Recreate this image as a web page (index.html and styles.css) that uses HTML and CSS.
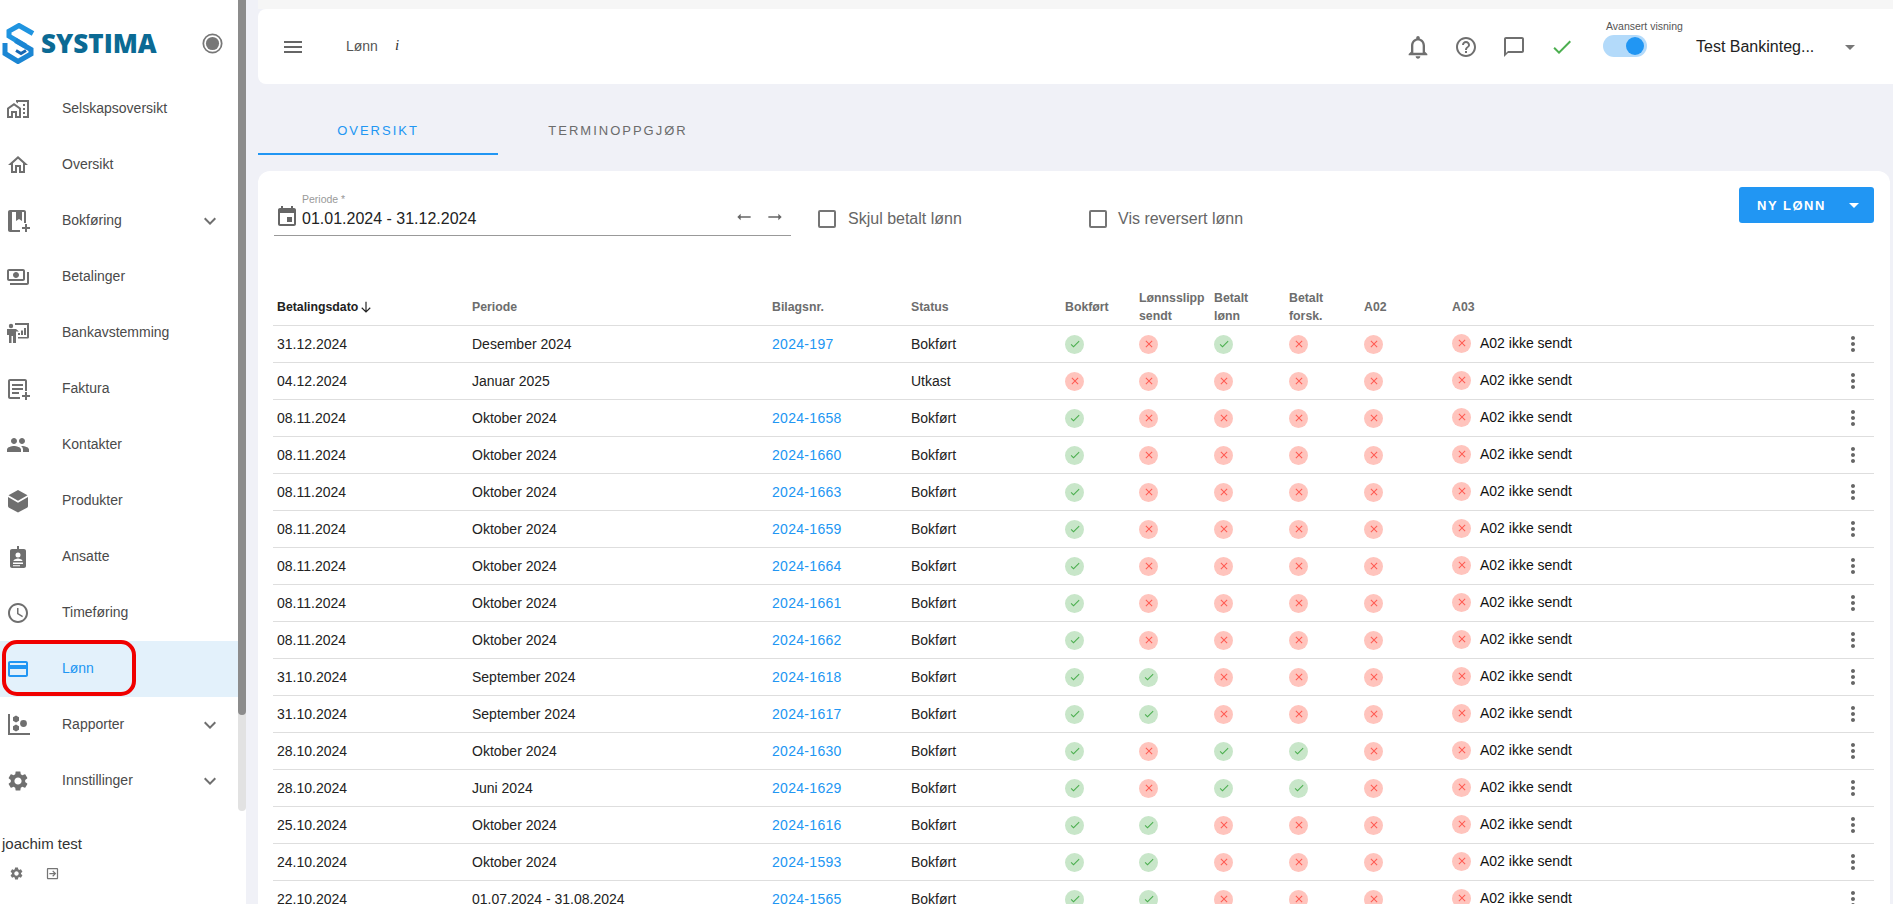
FILE: index.html
```html
<!DOCTYPE html>
<html lang="no">
<head>
<meta charset="utf-8">
<title>Lønn</title>
<link rel="stylesheet" href="styles.css">
</head>
<body>
<svg class="defs" width="0" height="0" aria-hidden="true">
  <symbol id="i-homework" viewBox="0 0 24 24"><path d="M1 11v10h6v-5h2v5h6V11L8 6l-7 5zm12 8h-2v-5H5v5H3v-7l5-3.5 5 3.5v7zM17 7h2v2h-2zM17 11h2v2h-2zM17 15h2v2h-2zM10 3v1.97l2 1.43V5h9v14h-4v2h6V3z"/></symbol>
  <symbol id="i-home" viewBox="0 0 24 24"><path d="M12 5.69l5 4.5V18h-2v-6H9v6H7v-7.81l5-4.5M12 3L2 12h3v8h6v-6h2v6h6v-8h3L12 3z"/></symbol>
  <symbol id="i-book" viewBox="0 0 24 24"><path fill-rule="evenodd" d="M4 1h14c1.100 0 2 .9 2 2v11h-2V3h-2v9l-3-2-3 2V3H6v18h8v2H4c-1.100 0-2-.9-2-2V3c0-1.100.9-2 2-2zm15 14h2v3h3v2h-3v3h-2v-3h-3v-2h3z"/></symbol>
  <symbol id="i-pay" viewBox="0 0 24 24"><path d="M19 14V6c0-1.1-.9-2-2-2H3c-1.1 0-2 .9-2 2v8c0 1.1.9 2 2 2h14c1.1 0 2-.9 2-2zm-2 0H3V6h14v8zm-7-7c-1.66 0-3 1.34-3 3s1.34 3 3 3 3-1.34 3-3-1.34-3-3-3zm13 0v11c0 1.1-.9 2-2 2H4v-2h17V7h2z"/></symbol>
  <symbol id="i-bank" viewBox="0 0 24 24"><circle cx="5" cy="5" r="2.200"/><path d="M1 8h9l3 2.500h-3V22H7v-7H5.500v7H3v-8H1z"/><path d="M9 2h14v14c0 1-.8 1.500-1.500 1.500H12V16h9V4H9z"/><path d="M12 12h2v2h-2zM15 9.500h2V14h-2zM18 7h2v7h-2z"/></symbol>
  <symbol id="i-invoice" viewBox="0 0 24 24"><path d="M4 2h15c1.100 0 2 .9 2 2v10h-2V4H4v16h10v2H4c-1.100 0-2-.9-2-2V4c0-1.100.9-2 2-2zm2 5h11v2H6zm0 4h11v2H6zm0 4h7v2H6zm13 0h2v3h3v2h-3v3h-2v-3h-3v-2h3z"/></symbol>
  <symbol id="i-people" viewBox="0 0 24 24"><path d="M16 11c1.660 0 2.990-1.340 2.990-3S17.660 5 16 5c-1.660 0-3 1.340-3 3s1.340 3 3 3zm-8 0c1.660 0 2.990-1.340 2.990-3S9.660 5 8 5C6.340 5 5 6.340 5 8s1.340 3 3 3zm0 2c-2.330 0-7 1.170-7 3.500V19h14v-2.500c0-2.330-4.670-3.500-7-3.500zm8 0c-.29 0-.62.02-.97.05 1.160.84 1.970 1.970 1.970 3.450V19h6v-2.500c0-2.330-4.670-3.500-7-3.500z"/></symbol>
  <symbol id="i-box" viewBox="0 0 24 24"><path d="M12 1l9.500 5.300-9.500 5.400-9.500-5.400z"/><path d="M2 8l10 5.700L22 8v9c0 .7-.4 1.400-1 1.700L12 23.500l-9-4.800c-.6-.3-1-1-1-1.700z"/></symbol>
  <symbol id="i-badge" viewBox="0 0 24 24"><path fill-rule="evenodd" d="M11 1h2v3h5c1.100 0 2 .9 2 2v15c0 1.100-.9 2-2 2H6c-1.100 0-2-.9-2-2V6c0-1.100.9-2 2-2h5zM12 7.500a2.500 2.500 0 100 5 2.500 2.500 0 000-5zM7.500 16c0-1.500 3-2.500 4.500-2.500s4.500 1 4.500 2.500H7.500zM7 17.500v1.500h10v-1.500zM7 20.200v1h7v-1z"/></symbol>
  <symbol id="i-clock" viewBox="0 0 24 24"><path d="M11.990 2C6.470 2 2 6.480 2 12s4.470 10 9.990 10C17.520 22 22 17.520 22 12S17.520 2 11.990 2zM12 20c-4.420 0-8-3.580-8-8s3.580-8 8-8 8 3.580 8 8-3.580 8-8 8zm.5-13H11v6l5.250 3.150.75-1.230-4.500-2.670z"/></symbol>
  <symbol id="i-card" viewBox="0 0 24 24"><path d="M20 4H4c-1.110 0-1.990.89-1.990 2L2 18c0 1.110.89 2 2 2h16c1.110 0 2-.89 2-2V6c0-1.110-.89-2-2-2zm0 14H4v-6h16v6zm0-10H4V6h16v2z"/></symbol>
  <symbol id="i-report" viewBox="0 0 24 24"><path d="M2 1h2v19h20v2H2z"/><path d="M10 2.500l3 1.700v3.500l-3 1.700-3-1.700V4.200zM10 11.500l3 1.700v3.500l-3 1.700-3-1.700v-3.500z"/><circle cx="17.500" cy="10.500" r="3.400"/></symbol>
  <symbol id="i-gear" viewBox="0 0 24 24"><path d="M19.140 12.940c.04-.3.06-.61.06-.94 0-.32-.02-.64-.07-.94l2.030-1.580c.18-.14.23-.41.12-.61l-1.920-3.320c-.12-.22-.37-.29-.59-.22l-2.390.96c-.5-.38-1.030-.7-1.620-.94l-.36-2.540c-.04-.24-.24-.41-.48-.41h-3.840c-.24 0-.43.17-.47.41l-.36 2.540c-.59.24-1.130.57-1.620.94l-2.390-.96c-.22-.08-.47 0-.59.22L2.740 8.870c-.12.21-.08.47.12.61l2.030 1.580c-.05.3-.09.63-.09.94s.02.64.07.94l-2.030 1.580c-.18.14-.23.41-.12.61l1.920 3.320c.12.22.37.29.59.22l2.390-.96c.5.38 1.030.7 1.620.94l.36 2.540c.05.24.24.41.48.41h3.840c.24 0 .44-.17.47-.41l.36-2.540c.59-.24 1.130-.56 1.620-.94l2.390.96c.22.08.47 0 .59-.22l1.920-3.320c.12-.22.07-.47-.12-.61l-2.010-1.580zM12 15.600c-1.980 0-3.600-1.620-3.600-3.600s1.620-3.600 3.600-3.600 3.600 1.620 3.600 3.600-1.620 3.600-3.600 3.600z"/></symbol>
  <symbol id="i-more" viewBox="0 0 24 24"><path d="M16.590 8.590L12 13.170 7.410 8.590 6 10l6 6 6-6z"/></symbol>
  <symbol id="i-logout" viewBox="0 0 24 24"><path d="M5 3h14c1.100 0 2 .9 2 2v14c0 1.100-.9 2-2 2H5c-1.100 0-2-.9-2-2V5c0-1.100.9-2 2-2zm0 2v14h14V5z"/><path d="M7 11h7.200l-2.600-2.600L13 7l5 5-5 5-1.400-1.400 2.600-2.600H7z"/></symbol>
  <symbol id="i-menu" viewBox="0 0 24 24"><path d="M3 18h18v-2H3v2zm0-5h18v-2H3v2zm0-7v2h18V6H3z"/></symbol>
  <symbol id="i-bell" viewBox="0 0 24 24"><path d="M12 22c1.100 0 2-.9 2-2h-4c0 1.100.9 2 2 2zm6-6v-5c0-3.070-1.630-5.640-4.500-6.320V4c0-.83-.67-1.500-1.500-1.500s-1.500.67-1.500 1.500v.68C7.640 5.360 6 7.920 6 11v5l-2 2v1h16v-1l-2-2zm-2 1H8v-6c0-2.480 1.510-4.500 4-4.500s4 2.020 4 4.500v6z"/></symbol>
  <symbol id="i-help" viewBox="0 0 24 24"><path d="M11 18h2v-2h-2v2zm1-16C6.480 2 2 6.480 2 12s4.480 10 10 10 10-4.480 10-10S17.520 2 12 2zm0 18c-4.410 0-8-3.590-8-8s3.590-8 8-8 8 3.590 8 8-3.590 8-8 8zm0-14c-2.210 0-4 1.790-4 4h2c0-1.100.9-2 2-2s2 .9 2 2c0 2-3 1.750-3 5h2c0-2.250 3-2.500 3-5 0-2.210-1.790-4-4-4z"/></symbol>
  <symbol id="i-chat" viewBox="0 0 24 24"><path d="M20 2H4c-1.100 0-2 .9-2 2v18l4-4h14c1.100 0 2-.9 2-2V4c0-1.100-.9-2-2-2zm0 14H6l-2 2V4h16v12z"/></symbol>
  <symbol id="i-check" viewBox="0 0 24 24"><path d="M9 16.170L4.830 12l-1.420 1.410L9 19 21 7l-1.410-1.410z"/></symbol>
  <symbol id="i-close" viewBox="0 0 24 24"><path d="M19 6.410L17.590 5 12 10.590 6.410 5 5 6.410 10.590 12 5 17.590 6.410 19 12 13.410 17.590 19 19 17.590 13.410 12z"/></symbol>
  <symbol id="i-drop" viewBox="0 0 24 24"><path d="M7 10l5 5 5-5z"/></symbol>
  <symbol id="i-cal" viewBox="0 0 24 24"><path d="M17 12h-5v5h5v-5zM16 1v2H8V1H6v2H5c-1.110 0-1.990.9-1.990 2L3 19c0 1.100.89 2 2 2h14c1.100 0 2-.9 2-2V5c0-1.100-.9-2-2-2h-1V1h-2zm3 18H5V8h14v11z"/></symbol>
  <symbol id="i-right" viewBox="0 0 24 24"><path d="M16.010 11H4v2h12.010v3L20 12l-3.990-4z"/></symbol>
  <symbol id="i-left" viewBox="0 0 24 24"><path d="M7.990 11H20v2H7.990v3L4 12l3.990-4z"/></symbol>
  <symbol id="i-down" viewBox="0 0 24 24"><path d="M11 3h2v15.200l5.600-5.600L20 14l-8 8-8-8 1.400-1.400 5.600 5.600z"/></symbol>
  <symbol id="i-vert" viewBox="0 0 24 24"><path d="M12 8c1.100 0 2-.9 2-2s-.9-2-2-2-2 .9-2 2 .9 2 2 2zm0 2c-1.100 0-2 .9-2 2s.9 2 2 2 2-.9 2-2-.9-2-2-2zm0 6c-1.100 0-2 .9-2 2s.9 2 2 2 2-.9 2-2-.9-2-2-2z"/></symbol>
</svg>

<div class="app">
  <aside class="sidebar">
    <div class="side-scroll">
      <div class="side-col">
        <div class="brand">
          <svg class="logo" viewBox="0 0 34 41">
            <path class="logo-a" d="M31 10.500L17 2.500 7 8.200v5L23.500 23"/>
            <path class="logo-b" d="M3 20v10.500L16 38.500l13-7.500v-4.500L13.500 17.500"/>
            <path class="logo-c" d="M14 27.500l5 3 5-3"/>
          </svg>
          <span class="brand-name">SYSTIMA</span>
          <svg class="radio" viewBox="0 0 24 24"><circle cx="12" cy="12" r="10.500" class="radio-ring"/><circle cx="12" cy="12" r="7.500" class="radio-dot"/></svg>
        </div>
        <nav class="nav">
          <a class="nav-item"><svg class="nav-icon"><use href="#i-homework"/></svg><span class="nav-label">Selskapsoversikt</span></a>
          <a class="nav-item"><svg class="nav-icon"><use href="#i-home"/></svg><span class="nav-label">Oversikt</span></a>
          <a class="nav-item"><svg class="nav-icon"><use href="#i-book"/></svg><span class="nav-label">Bokføring</span><svg class="nav-caret"><use href="#i-more"/></svg></a>
          <a class="nav-item"><svg class="nav-icon"><use href="#i-pay"/></svg><span class="nav-label">Betalinger</span></a>
          <a class="nav-item"><svg class="nav-icon"><use href="#i-bank"/></svg><span class="nav-label">Bankavstemming</span></a>
          <a class="nav-item"><svg class="nav-icon"><use href="#i-invoice"/></svg><span class="nav-label">Faktura</span></a>
          <a class="nav-item"><svg class="nav-icon"><use href="#i-people"/></svg><span class="nav-label">Kontakter</span></a>
          <a class="nav-item"><svg class="nav-icon"><use href="#i-box"/></svg><span class="nav-label">Produkter</span></a>
          <a class="nav-item"><svg class="nav-icon"><use href="#i-badge"/></svg><span class="nav-label">Ansatte</span></a>
          <a class="nav-item"><svg class="nav-icon"><use href="#i-clock"/></svg><span class="nav-label">Timeføring</span></a>
          <a class="nav-item active"><svg class="nav-icon"><use href="#i-card"/></svg><span class="nav-label">Lønn</span><span class="marker"></span></a>
          <a class="nav-item"><svg class="nav-icon"><use href="#i-report"/></svg><span class="nav-label">Rapporter</span><svg class="nav-caret"><use href="#i-more"/></svg></a>
          <a class="nav-item"><svg class="nav-icon"><use href="#i-gear"/></svg><span class="nav-label">Innstillinger</span><svg class="nav-caret"><use href="#i-more"/></svg></a>
        </nav>
      </div>
      <div class="scrollbar"><div class="scroll-thumb"></div></div>
    </div>
    <div class="user">
      <div class="user-name">joachim test</div>
      <div class="user-actions">
        <svg class="user-icon"><use href="#i-gear"/></svg>
        <svg class="user-icon"><use href="#i-logout"/></svg>
      </div>
    </div>
  </aside>

  <main class="main">
    <header class="topbar">
      <svg class="hamburger"><use href="#i-menu"/></svg>
      <span class="page-title">Lønn</span>
      <span class="page-info">i</span>
      <div class="top-actions">
        <svg class="top-icon top-bell"><use href="#i-bell"/></svg>
        <svg class="top-icon"><use href="#i-help"/></svg>
        <svg class="top-icon"><use href="#i-chat"/></svg>
        <svg class="top-icon top-check"><use href="#i-check"/></svg>
        <div class="toggle-wrap">
          <span class="toggle-label">Avansert visning</span>
          <span class="toggle"><span class="knob"></span></span>
        </div>
        <span class="company">Test Bankinteg...</span>
        <svg class="company-caret"><use href="#i-drop"/></svg>
      </div>
    </header>

    <div class="tabs">
      <a class="tab active">OVERSIKT</a>
      <a class="tab">TERMINOPPGJØR</a>
    </div>

    <section class="card">
      <div class="filters">
        <div class="period">
          <svg class="cal"><use href="#i-cal"/></svg>
          <div class="period-text">
            <span class="period-label">Periode *</span>
            <span class="period-value">01.01.2024 - 31.12.2024</span>
          </div>
          <svg class="arrow"><use href="#i-left"/></svg>
          <svg class="arrow"><use href="#i-right"/></svg>
        </div>
        <label class="check check-one"><span class="box"></span>Skjul betalt lønn</label>
        <label class="check check-two"><span class="box"></span>Vis reversert lønn</label>
        <button class="new-btn"><span>NY LØNN</span><svg class="btn-caret"><use href="#i-drop"/></svg></button>
      </div>

      <table class="grid">
        <colgroup>
          <col class="c-date"><col class="c-period"><col class="c-ref"><col class="c-status">
          <col class="c-f1"><col class="c-flag"><col class="c-flag"><col class="c-flag"><col class="c-a02"><col class="c-a03"><col class="c-menu">
        </colgroup>
        <thead>
          <tr>
            <th class="sorted">Betalingsdato<svg class="sort"><use href="#i-down"/></svg></th>
            <th>Periode</th><th>Bilagsnr.</th><th>Status</th><th>Bokført</th>
            <th>Lønnsslipp<br>sendt</th><th>Betalt<br>lønn</th><th>Betalt<br>forsk.</th><th>A02</th><th>A03</th><th></th>
          </tr>
        </thead>
        <tbody>
          <tr><td>31.12.2024</td><td>Desember 2024</td><td><a class="ref">2024-197</a></td><td>Bokført</td><td><span class="st ok"><svg><use href="#i-check"/></svg></span></td><td><span class="st no"><svg><use href="#i-close"/></svg></span></td><td><span class="st ok"><svg><use href="#i-check"/></svg></span></td><td><span class="st no"><svg><use href="#i-close"/></svg></span></td><td><span class="st no"><svg><use href="#i-close"/></svg></span></td><td class="a03"><span class="st no"><svg><use href="#i-close"/></svg></span><span class="a03-text">A02 ikke sendt</span></td><td class="menu"><svg class="kebab"><use href="#i-vert"/></svg></td></tr>
          <tr><td>04.12.2024</td><td>Januar 2025</td><td></td><td>Utkast</td><td><span class="st no"><svg><use href="#i-close"/></svg></span></td><td><span class="st no"><svg><use href="#i-close"/></svg></span></td><td><span class="st no"><svg><use href="#i-close"/></svg></span></td><td><span class="st no"><svg><use href="#i-close"/></svg></span></td><td><span class="st no"><svg><use href="#i-close"/></svg></span></td><td class="a03"><span class="st no"><svg><use href="#i-close"/></svg></span><span class="a03-text">A02 ikke sendt</span></td><td class="menu"><svg class="kebab"><use href="#i-vert"/></svg></td></tr>
          <tr><td>08.11.2024</td><td>Oktober 2024</td><td><a class="ref">2024-1658</a></td><td>Bokført</td><td><span class="st ok"><svg><use href="#i-check"/></svg></span></td><td><span class="st no"><svg><use href="#i-close"/></svg></span></td><td><span class="st no"><svg><use href="#i-close"/></svg></span></td><td><span class="st no"><svg><use href="#i-close"/></svg></span></td><td><span class="st no"><svg><use href="#i-close"/></svg></span></td><td class="a03"><span class="st no"><svg><use href="#i-close"/></svg></span><span class="a03-text">A02 ikke sendt</span></td><td class="menu"><svg class="kebab"><use href="#i-vert"/></svg></td></tr>
          <tr><td>08.11.2024</td><td>Oktober 2024</td><td><a class="ref">2024-1660</a></td><td>Bokført</td><td><span class="st ok"><svg><use href="#i-check"/></svg></span></td><td><span class="st no"><svg><use href="#i-close"/></svg></span></td><td><span class="st no"><svg><use href="#i-close"/></svg></span></td><td><span class="st no"><svg><use href="#i-close"/></svg></span></td><td><span class="st no"><svg><use href="#i-close"/></svg></span></td><td class="a03"><span class="st no"><svg><use href="#i-close"/></svg></span><span class="a03-text">A02 ikke sendt</span></td><td class="menu"><svg class="kebab"><use href="#i-vert"/></svg></td></tr>
          <tr><td>08.11.2024</td><td>Oktober 2024</td><td><a class="ref">2024-1663</a></td><td>Bokført</td><td><span class="st ok"><svg><use href="#i-check"/></svg></span></td><td><span class="st no"><svg><use href="#i-close"/></svg></span></td><td><span class="st no"><svg><use href="#i-close"/></svg></span></td><td><span class="st no"><svg><use href="#i-close"/></svg></span></td><td><span class="st no"><svg><use href="#i-close"/></svg></span></td><td class="a03"><span class="st no"><svg><use href="#i-close"/></svg></span><span class="a03-text">A02 ikke sendt</span></td><td class="menu"><svg class="kebab"><use href="#i-vert"/></svg></td></tr>
          <tr><td>08.11.2024</td><td>Oktober 2024</td><td><a class="ref">2024-1659</a></td><td>Bokført</td><td><span class="st ok"><svg><use href="#i-check"/></svg></span></td><td><span class="st no"><svg><use href="#i-close"/></svg></span></td><td><span class="st no"><svg><use href="#i-close"/></svg></span></td><td><span class="st no"><svg><use href="#i-close"/></svg></span></td><td><span class="st no"><svg><use href="#i-close"/></svg></span></td><td class="a03"><span class="st no"><svg><use href="#i-close"/></svg></span><span class="a03-text">A02 ikke sendt</span></td><td class="menu"><svg class="kebab"><use href="#i-vert"/></svg></td></tr>
          <tr><td>08.11.2024</td><td>Oktober 2024</td><td><a class="ref">2024-1664</a></td><td>Bokført</td><td><span class="st ok"><svg><use href="#i-check"/></svg></span></td><td><span class="st no"><svg><use href="#i-close"/></svg></span></td><td><span class="st no"><svg><use href="#i-close"/></svg></span></td><td><span class="st no"><svg><use href="#i-close"/></svg></span></td><td><span class="st no"><svg><use href="#i-close"/></svg></span></td><td class="a03"><span class="st no"><svg><use href="#i-close"/></svg></span><span class="a03-text">A02 ikke sendt</span></td><td class="menu"><svg class="kebab"><use href="#i-vert"/></svg></td></tr>
          <tr><td>08.11.2024</td><td>Oktober 2024</td><td><a class="ref">2024-1661</a></td><td>Bokført</td><td><span class="st ok"><svg><use href="#i-check"/></svg></span></td><td><span class="st no"><svg><use href="#i-close"/></svg></span></td><td><span class="st no"><svg><use href="#i-close"/></svg></span></td><td><span class="st no"><svg><use href="#i-close"/></svg></span></td><td><span class="st no"><svg><use href="#i-close"/></svg></span></td><td class="a03"><span class="st no"><svg><use href="#i-close"/></svg></span><span class="a03-text">A02 ikke sendt</span></td><td class="menu"><svg class="kebab"><use href="#i-vert"/></svg></td></tr>
          <tr><td>08.11.2024</td><td>Oktober 2024</td><td><a class="ref">2024-1662</a></td><td>Bokført</td><td><span class="st ok"><svg><use href="#i-check"/></svg></span></td><td><span class="st no"><svg><use href="#i-close"/></svg></span></td><td><span class="st no"><svg><use href="#i-close"/></svg></span></td><td><span class="st no"><svg><use href="#i-close"/></svg></span></td><td><span class="st no"><svg><use href="#i-close"/></svg></span></td><td class="a03"><span class="st no"><svg><use href="#i-close"/></svg></span><span class="a03-text">A02 ikke sendt</span></td><td class="menu"><svg class="kebab"><use href="#i-vert"/></svg></td></tr>
          <tr><td>31.10.2024</td><td>September 2024</td><td><a class="ref">2024-1618</a></td><td>Bokført</td><td><span class="st ok"><svg><use href="#i-check"/></svg></span></td><td><span class="st ok"><svg><use href="#i-check"/></svg></span></td><td><span class="st no"><svg><use href="#i-close"/></svg></span></td><td><span class="st no"><svg><use href="#i-close"/></svg></span></td><td><span class="st no"><svg><use href="#i-close"/></svg></span></td><td class="a03"><span class="st no"><svg><use href="#i-close"/></svg></span><span class="a03-text">A02 ikke sendt</span></td><td class="menu"><svg class="kebab"><use href="#i-vert"/></svg></td></tr>
          <tr><td>31.10.2024</td><td>September 2024</td><td><a class="ref">2024-1617</a></td><td>Bokført</td><td><span class="st ok"><svg><use href="#i-check"/></svg></span></td><td><span class="st ok"><svg><use href="#i-check"/></svg></span></td><td><span class="st no"><svg><use href="#i-close"/></svg></span></td><td><span class="st no"><svg><use href="#i-close"/></svg></span></td><td><span class="st no"><svg><use href="#i-close"/></svg></span></td><td class="a03"><span class="st no"><svg><use href="#i-close"/></svg></span><span class="a03-text">A02 ikke sendt</span></td><td class="menu"><svg class="kebab"><use href="#i-vert"/></svg></td></tr>
          <tr><td>28.10.2024</td><td>Oktober 2024</td><td><a class="ref">2024-1630</a></td><td>Bokført</td><td><span class="st ok"><svg><use href="#i-check"/></svg></span></td><td><span class="st no"><svg><use href="#i-close"/></svg></span></td><td><span class="st ok"><svg><use href="#i-check"/></svg></span></td><td><span class="st ok"><svg><use href="#i-check"/></svg></span></td><td><span class="st no"><svg><use href="#i-close"/></svg></span></td><td class="a03"><span class="st no"><svg><use href="#i-close"/></svg></span><span class="a03-text">A02 ikke sendt</span></td><td class="menu"><svg class="kebab"><use href="#i-vert"/></svg></td></tr>
          <tr><td>28.10.2024</td><td>Juni 2024</td><td><a class="ref">2024-1629</a></td><td>Bokført</td><td><span class="st ok"><svg><use href="#i-check"/></svg></span></td><td><span class="st no"><svg><use href="#i-close"/></svg></span></td><td><span class="st ok"><svg><use href="#i-check"/></svg></span></td><td><span class="st ok"><svg><use href="#i-check"/></svg></span></td><td><span class="st no"><svg><use href="#i-close"/></svg></span></td><td class="a03"><span class="st no"><svg><use href="#i-close"/></svg></span><span class="a03-text">A02 ikke sendt</span></td><td class="menu"><svg class="kebab"><use href="#i-vert"/></svg></td></tr>
          <tr><td>25.10.2024</td><td>Oktober 2024</td><td><a class="ref">2024-1616</a></td><td>Bokført</td><td><span class="st ok"><svg><use href="#i-check"/></svg></span></td><td><span class="st ok"><svg><use href="#i-check"/></svg></span></td><td><span class="st no"><svg><use href="#i-close"/></svg></span></td><td><span class="st no"><svg><use href="#i-close"/></svg></span></td><td><span class="st no"><svg><use href="#i-close"/></svg></span></td><td class="a03"><span class="st no"><svg><use href="#i-close"/></svg></span><span class="a03-text">A02 ikke sendt</span></td><td class="menu"><svg class="kebab"><use href="#i-vert"/></svg></td></tr>
          <tr><td>24.10.2024</td><td>Oktober 2024</td><td><a class="ref">2024-1593</a></td><td>Bokført</td><td><span class="st ok"><svg><use href="#i-check"/></svg></span></td><td><span class="st ok"><svg><use href="#i-check"/></svg></span></td><td><span class="st no"><svg><use href="#i-close"/></svg></span></td><td><span class="st no"><svg><use href="#i-close"/></svg></span></td><td><span class="st no"><svg><use href="#i-close"/></svg></span></td><td class="a03"><span class="st no"><svg><use href="#i-close"/></svg></span><span class="a03-text">A02 ikke sendt</span></td><td class="menu"><svg class="kebab"><use href="#i-vert"/></svg></td></tr>
          <tr><td>22.10.2024</td><td>01.07.2024 - 31.08.2024</td><td><a class="ref">2024-1565</a></td><td>Bokført</td><td><span class="st ok"><svg><use href="#i-check"/></svg></span></td><td><span class="st ok"><svg><use href="#i-check"/></svg></span></td><td><span class="st no"><svg><use href="#i-close"/></svg></span></td><td><span class="st no"><svg><use href="#i-close"/></svg></span></td><td><span class="st no"><svg><use href="#i-close"/></svg></span></td><td class="a03"><span class="st no"><svg><use href="#i-close"/></svg></span><span class="a03-text">A02 ikke sendt</span></td><td class="menu"><svg class="kebab"><use href="#i-vert"/></svg></td></tr>
        </tbody>
      </table>
    </section>
  </main>
</div>
</body>
</html>
```
FILE: styles.css
```css
* { box-sizing: border-box; }
html, body { margin: 0; height: 100%; overflow: hidden; }
body { font-family: "Liberation Sans", Arial, sans-serif; color: #222; background: #f0f1f7; }
.defs { position: absolute; }
.app { display: flex; height: 904px; overflow: hidden; }

/* Sidebar */
.sidebar { width: 246px; flex: none; background: #fff; display: flex; flex-direction: column; }
.side-scroll { display: flex; height: 811px; flex: none; }
.side-col { width: 238px; flex: none; }
.scrollbar { width: 8px; height: 811px; background: #e2e2e2; border-radius: 0 0 4px 4px; }
.scroll-thumb { height: 715px; background: #8c8c8c; border-radius: 0 0 4px 4px; }
.brand { height: 81px; display: flex; align-items: center; padding-left: 2px; padding-top: 5px; }
.logo { width: 34px; height: 41px; flex: none; fill: none; }
.logo-a, .logo-b { stroke-width: 5; fill: none; stroke-linejoin: miter; }
.logo-a { stroke: #1f94e0; }
.logo-b { stroke: #1b86d3; }
.logo-c { stroke: #1567b3; stroke-width: 3; fill: none; }
.brand-name { font-family: "Open Sans", "Liberation Sans", sans-serif; font-weight: 800; font-size: 26px; color: #0b6a94; margin-left: 5px; letter-spacing: 0; width: 156px; }
.radio { width: 21px; height: 21px; flex: none; margin-left: 5px; }
.radio-ring { fill: #fff; stroke: #777; stroke-width: 2; }
.radio-dot { fill: #777; }
.nav { display: flex; flex-direction: column; }
.nav-item { position: relative; display: flex; align-items: center; height: 56px; padding-left: 6px; color: #4a4a4a; }
.nav-icon { width: 24px; height: 24px; flex: none; fill: #6f6f6f; }
.nav-label { margin-left: 32px; font-size: 14px; flex: 1; padding-bottom: 3px; }
.nav-caret { width: 24px; height: 24px; flex: none; fill: #6f6f6f; margin-right: 16px; }
.nav-item.active { background: #e3f1fb; color: #2196f3; }
.nav-item.active .nav-icon { fill: #2196f3; }
.marker { position: absolute; left: 2px; top: -1px; width: 134px; height: 56px; border: 4px solid #f00000; border-radius: 15px; }
.user { padding: 23px 0 0 2px; }
.user-name { font-size: 15px; color: #333; line-height: 20px; }
.user-actions { display: flex; gap: 21px; margin-top: 12px; padding-left: 7px; }
.user-icon { width: 15px; height: 15px; fill: #757575; flex: none; }

/* Main */
.main { flex: 1; min-width: 0; margin-left: 12px; display: flex; flex-direction: column; background: linear-gradient(#f6f6f6 9px, transparent 9px); }
.topbar { margin-top: 9px; height: 75px; flex: none; background: #fff; border-radius: 8px 0 0 8px; display: flex; align-items: center; padding-left: 25px; }
.hamburger { width: 24px; height: 24px; fill: #666; flex: none; margin-left: -2px; }
.page-title { font-size: 14px; color: #555; margin-left: 41px; padding-bottom: 2px; }
.page-info { font: italic 15px "Liberation Serif", serif; color: #333; margin-left: 17px; padding-bottom: 2px; }
.top-actions { margin-left: auto; display: flex; align-items: center; }
.top-icon { width: 24px; height: 24px; fill: #6f6f6f; flex: none; margin-right: 24px; }
.top-bell { width: 28px; height: 28px; margin: 0 22px 0 -2px; }
.top-check { fill: #4caf50; margin-right: 29px; }
.toggle-wrap { width: 93px; height: 44px; margin-top: -9px; display: flex; flex-direction: column; }
.toggle-label { font-size: 10.500px; color: #555; white-space: nowrap; line-height: 12px; margin-left: 3px; margin-bottom: 3px; }
.toggle { width: 44px; height: 22px; border-radius: 11px; background: #b3dafa; display: flex; align-items: center; justify-content: flex-end; padding-right: 3px; }
.knob { width: 18px; height: 18px; border-radius: 50%; background: #2196f3; }
.company { font-size: 16px; color: #222; white-space: nowrap; width: 142px; }
.company-caret { width: 24px; height: 24px; fill: #777; flex: none; margin-right: 31px; }

/* Tabs */
.tabs { display: flex; height: 71px; flex: none; }
.tab { width: 240px; display: flex; align-items: center; justify-content: center; font-size: 13px; letter-spacing: 2px; color: #6b6b6b; padding-top: 24px; height: 71px; border-bottom: 2px solid transparent; }
.tab.active { color: #2196f3; border-bottom-color: #2196f3; }

/* Card */
.card { margin: 16px 3px 0 0; background: #fff; border-radius: 12px 12px 0 0; padding: 0 16px 0 15px; flex: 1; min-height: 0; overflow: hidden; }
.filters { display: flex; align-items: flex-start; height: 111px; }
.period { width: 517px; margin-left: 1px; height: 65px; flex: none; border-bottom: 1px solid #999; display: flex; align-items: flex-end; padding: 0 6px 6px 1px; }
.cal { width: 24px; height: 24px; fill: #666; flex: none; margin-right: 3px; }
.period-text { flex: 1; display: flex; flex-direction: column; }
.period-label { font-size: 10.500px; color: #999; line-height: 12px; margin-bottom: 3px; }
.period-value { font-size: 16px; color: #222; line-height: 21px; }
.arrow { width: 20px; height: 20px; fill: #666; flex: none; margin-left: 11px; margin-bottom: 2px; }
.check { display: flex; align-items: center; font-size: 16px; color: #666; margin-top: 39px; height: 18px; flex: none; }
.check-one { margin-left: 27px; width: 271px; }
.check-two { width: 200px; }
.box { width: 18px; height: 18px; border: 2px solid #757575; border-radius: 2px; margin-right: 12px; flex: none; }
.check-two .box { margin-right: 11px; }
.new-btn { margin: 16px 0 0 auto; width: 135px; height: 36px; flex: none; border: 0; border-radius: 3px; background: #2196f3; color: #fff; font: 700 13px "Liberation Sans", sans-serif; letter-spacing: 1.500px; display: flex; align-items: center; padding: 0 8px 0 18px; justify-content: space-between; }
.btn-caret { width: 24px; height: 24px; fill: #fff; flex: none; }

.grid { width: 1601px; border-collapse: collapse; table-layout: fixed; font-size: 14px; }
.c-date { width: 195px; } .c-period { width: 300px; } .c-ref { width: 139px; } .c-status { width: 154px; }
.c-f1 { width: 74px; } .c-flag { width: 75px; } .c-a02 { width: 88px; } .c-a03 { width: 280px; } .c-menu { width: 146px; }
.grid th { height: 43px; padding: 7px 0 0 4px; text-align: left; font-size: 12.300px; line-height: 18px; font-weight: 700; color: #6d6d6d; border-bottom: 1px solid #dedede; white-space: nowrap; }
.grid th.sorted { color: #222; }
.sort { width: 14px; height: 14px; fill: #222; vertical-align: -3px; margin-left: 1px; }
.grid td { height: 37px; padding: 0 0 0 4px; border-bottom: 1px solid #dedede; color: #222; white-space: nowrap; }
.ref { color: #2196f3; letter-spacing: 0.3px; }
.st { display: inline-flex; width: 19px; height: 19px; border-radius: 50%; align-items: center; justify-content: center; vertical-align: middle; }
.st svg { width: 12px; height: 12px; }
.st.ok { background: #c8e6c9; fill: #4caf50; }
.st.no { background: #ffc4bd; fill: #ff5a52; }
.a03 .st { margin-top: -3px; }
.a03-text { color: #111; margin-left: 9px; }
.menu { text-align: right; padding-right: 9px !important; }
.kebab { width: 24px; height: 24px; fill: #666; vertical-align: middle; }
```
